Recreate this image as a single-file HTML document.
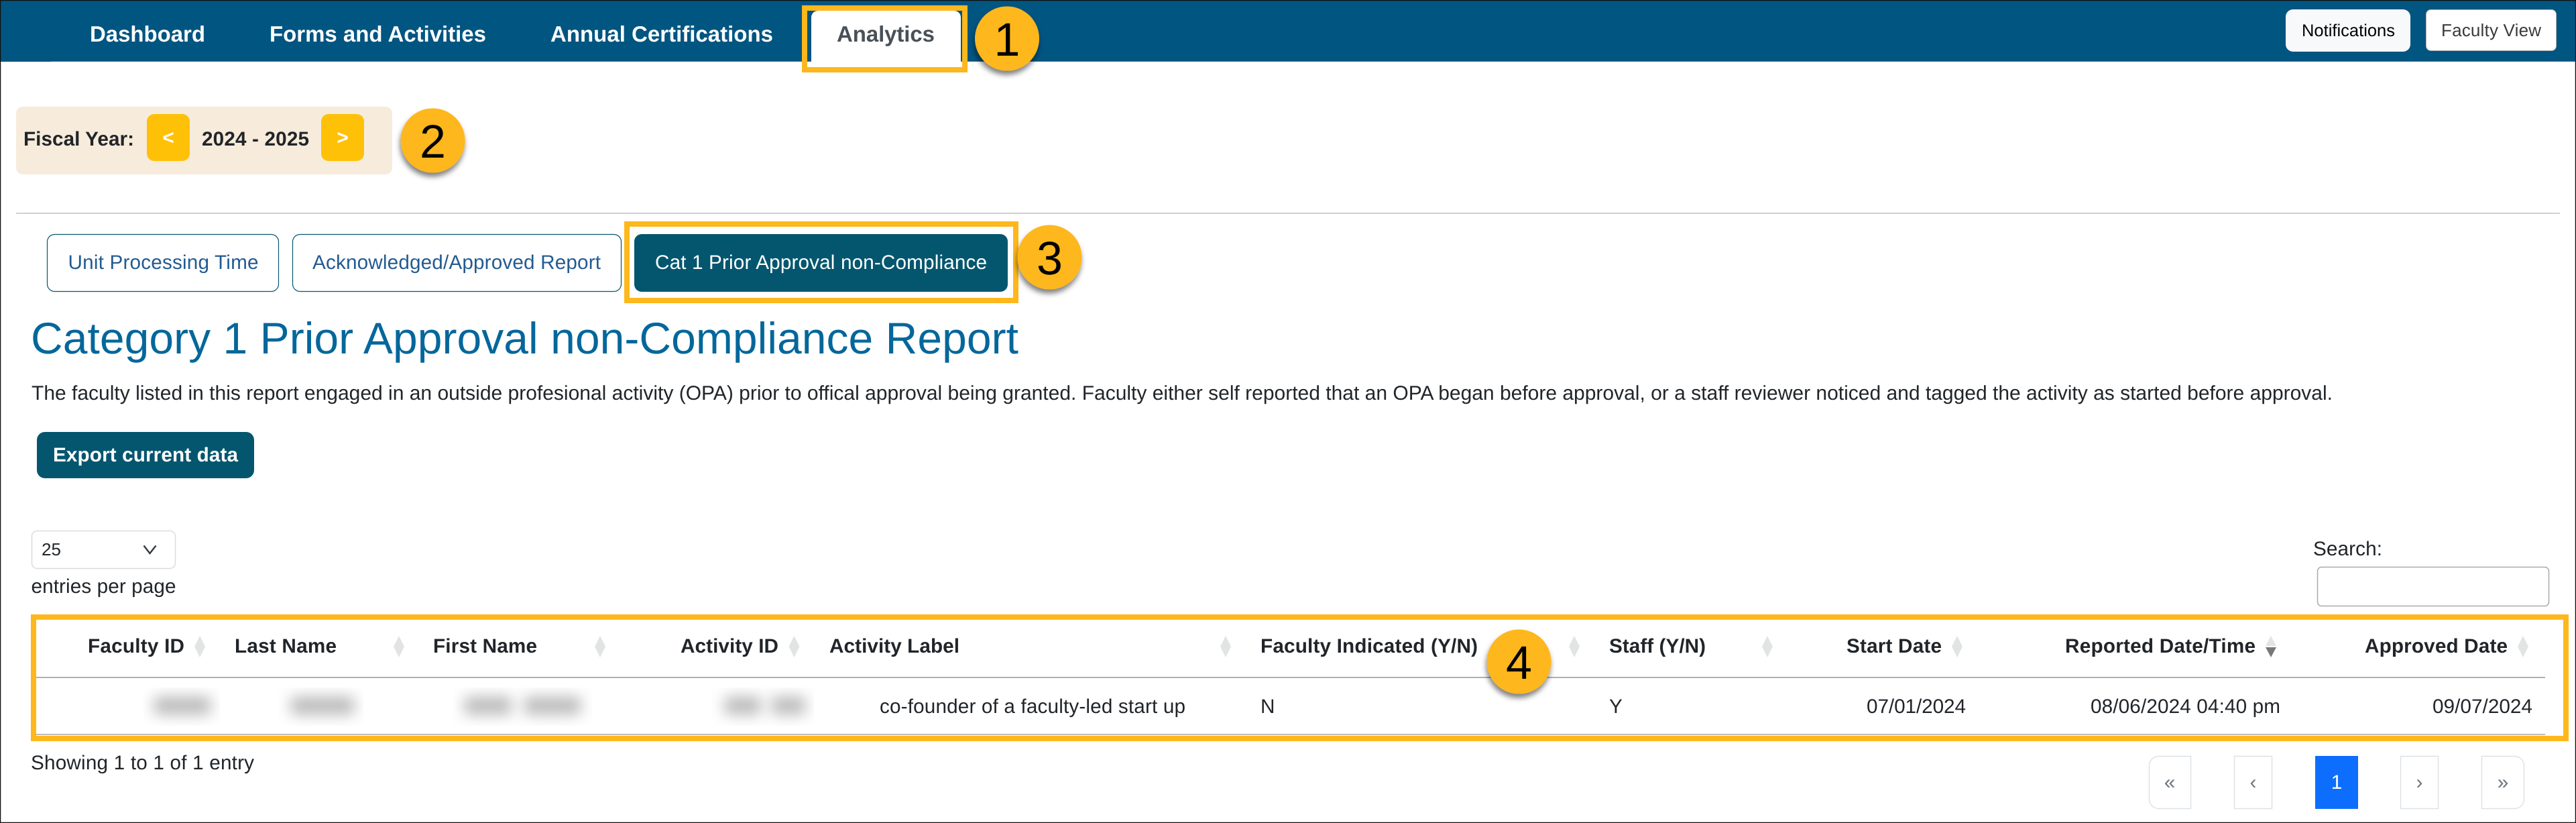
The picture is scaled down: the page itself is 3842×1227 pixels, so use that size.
<!DOCTYPE html>
<html lang="en">
<head>
<meta charset="utf-8">
<title>Category 1 Prior Approval non-Compliance Report</title>
<style>
html,body{margin:0;padding:0;background:#fff;width:3842px;height:1227px;overflow:hidden}
svg{display:block;position:absolute;left:0;top:0}
text{font-family:"Liberation Sans",Arial,sans-serif;font-size:29.7px;fill:#212529;white-space:pre;text-rendering:geometricPrecision}
.b{font-weight:700}
.nav{font-weight:700;font-size:33px;fill:#fff}
.d{font-size:70px;fill:#000;text-anchor:middle}
.tab{fill:#235b90}
.pg{fill:#6c757d;text-anchor:middle}
.o{fill:none;stroke:#feb71c;stroke-width:8}
.s{fill:#e2e3e3}
.c{fill:#feb71c;filter:url(#sh)}
.bl{fill:#b8b8b8}
</style>
</head>
<body>
<svg width="3842" height="1227" viewBox="0 0 3842 1227" xmlns="http://www.w3.org/2000/svg">
<defs>
<filter id="sh" x="-30%" y="-30%" width="160%" height="170%"><feDropShadow dx="-1" dy="6" stdDeviation="4" flood-color="#000" flood-opacity=".5"/></filter>
<filter id="bl" x="-100%" y="-200%" width="300%" height="500%"><feGaussianBlur stdDeviation="11"/></filter>
<clipPath id="c1"><rect x="214" y="1025" width="114" height="57"/></clipPath>
<clipPath id="c2"><rect x="415" y="1025" width="127" height="57"/></clipPath>
<clipPath id="c3"><rect x="676" y="1025" width="207" height="57"/></clipPath>
<clipPath id="c4"><rect x="1060" y="1025" width="154" height="57"/></clipPath>
</defs>

<rect width="3842" height="1227" fill="#fff"/>

<!-- header -->
<rect x="0" y="0" width="3842" height="92" fill="#015581"/>
<rect x="76" y="91" width="3766" height="1" fill="#666"/>
<text class="nav" x="134" y="62" textLength="172">Dashboard</text>
<text class="nav" x="402" y="62" textLength="323">Forms and Activities</text>
<text class="nav" x="821" y="62" textLength="332">Annual Certifications</text>
<path d="M1210 100V26a10 10 0 0 1 10-10h203a10 10 0 0 1 10 10v74z" fill="#fff"/>
<text class="nav" x="1248" y="62" textLength="146" style="fill:#495057">Analytics</text>
<rect x="1200" y="12" width="239" height="92" class="o"/>
<rect x="1204" y="92" width="231" height="8" fill="#fff"/>
<circle cx="1502" cy="57.5" r="48" class="c"/>
<text class="d" x="1502" y="83">1</text>

<rect x="3409" y="14" width="186" height="63" rx="11" fill="#f8f9fa"/>
<text x="3433" y="54" textLength="139" style="font-size:25.5px;fill:#000">Notifications</text>
<rect x="3618.5" y="14.5" width="194" height="61" rx="7" fill="#fff" stroke="#b5b5b5"/>
<text x="3641" y="54" textLength="149" style="font-size:26px;fill:#3a3a3a">Faculty View</text>

<!-- fiscal year -->
<rect x="24" y="159" width="561" height="101" rx="10" fill="#f7ebdc"/>
<text class="b" x="35" y="217" textLength="165">Fiscal Year:</text>
<rect x="219" y="170" width="64" height="70" rx="11" fill="#ffc107"/>
<text class="b" x="251" y="215" text-anchor="middle" style="fill:#fff">&lt;</text>
<text class="b" x="301" y="217" textLength="160">2024 - 2025</text>
<rect x="479" y="170" width="64" height="70" rx="11" fill="#ffc107"/>
<text class="b" x="511" y="215" text-anchor="middle" style="fill:#fff">&gt;</text>
<circle cx="645.5" cy="209.5" r="48" class="c"/>
<text class="d" x="645.5" y="235">2</text>

<rect x="24" y="317" width="3794" height="2" fill="#d0d0d0"/>

<!-- tabs -->
<rect x="70.5" y="349.5" width="345" height="85" rx="11" fill="#fff" stroke="#04566e" stroke-width="1.2"/>
<text class="tab" x="101.500" y="401" textLength="284">Unit Processing Time</text>
<rect x="436.5" y="349.5" width="490" height="85" rx="11" fill="#fff" stroke="#04566e" stroke-width="1.2"/>
<text class="tab" x="466" y="401" textLength="430">Acknowledged/Approved Report</text>
<rect x="946" y="349" width="557" height="86" rx="11" fill="#04566e"/>
<text x="977" y="401" textLength="495" style="fill:#fff">Cat 1 Prior Approval non-Compliance</text>
<rect x="935" y="334" width="580" height="114" class="o"/>
<circle cx="1565.5" cy="383.5" r="48" class="c"/>
<text class="d" x="1565.5" y="409">3</text>

<!-- heading -->
<text x="46" y="527" textLength="1473" style="font-size:66px;fill:#04679b">Category 1 Prior Approval non-Compliance Report</text>
<text x="47" y="596" textLength="3432" style="font-size:30px">The faculty listed in this report engaged in an outside profesional activity (OPA) prior to offical approval being granted. Faculty either self reported that an OPA began before approval, or a staff reviewer noticed and tagged the activity as started before approval.</text>

<rect x="55" y="644" width="324" height="69" rx="12" fill="#04566e"/>
<text class="b" x="79" y="688" textLength="276" style="fill:#fff">Export current data</text>

<!-- length + search -->
<rect x="47.5" y="791.5" width="214" height="56" rx="8" fill="#fff" stroke="#dcdcdc" stroke-width="1.5"/>
<text x="62" y="828" style="font-size:26px">25</text>
<path d="M214.5 813.5 223.5 825 232.5 813.5" fill="none" stroke="#343a40" stroke-width="2.4"/>
<text x="46.500" y="884" textLength="216">entries per page</text>
<text x="3450" y="828" textLength="103">Search:</text>
<rect x="3456.5" y="845.5" width="345" height="58" rx="6" fill="#fff" stroke="#aaa" stroke-width="1.5"/>

<!-- table -->
<rect x="54" y="1009" width="3742" height="2" fill="#b0b0b0"/>
<rect x="54" y="1094" width="3742" height="2" fill="#bbb"/>
<text class="b" x="131" y="973" textLength="144">Faculty ID</text>
<text class="b" x="350" y="973" textLength="152">Last Name</text>
<text class="b" x="646" y="973" textLength="155">First Name</text>
<text class="b" x="1015" y="973" textLength="146">Activity ID</text>
<text class="b" x="1237" y="973" textLength="194">Activity Label</text>
<text class="b" x="1880" y="973" textLength="324">Faculty Indicated (Y/N)</text>
<text class="b" x="2400" y="973" textLength="144">Staff (Y/N)</text>
<text class="b" x="2754" y="973" textLength="142">Start Date</text>
<text class="b" x="3080" y="973" textLength="284">Reported Date/Time</text>
<text class="b" x="3527" y="973" textLength="213">Approved Date</text>
<path class="s" d="M298 948l8 16-8 16-8-16zM595 948l8 16-8 16-8-16zM895 948l8 16-8 16-8-16zM1184.500 948l8 16-8 16-8-16zM1828 948l8 16-8 16-8-16zM2348 948l8 16-8 16-8-16zM2636 948l8 16-8 16-8-16zM2919 948l8 16-8 16-8-16zM3763 948l8 16-8 16-8-16z"/>
<path class="s" d="M3387 948l8 15h-16z"/>
<path fill="#77787b" d="M3379 965h16l-8 15z"/>

<g clip-path="url(#c1)"><rect class="bl" x="230" y="1039" width="84" height="26" filter="url(#bl)"/></g>
<g clip-path="url(#c2)"><rect class="bl" x="434" y="1039" width="94" height="26" filter="url(#bl)"/></g>
<g clip-path="url(#c3)"><rect class="bl" x="693" y="1039" width="70" height="26" filter="url(#bl)"/><rect class="bl" x="782" y="1039" width="84" height="26" filter="url(#bl)"/></g>
<g clip-path="url(#c4)"><rect class="bl" x="1081" y="1039" width="54" height="26" filter="url(#bl)"/><rect class="bl" x="1151" y="1039" width="50" height="26" filter="url(#bl)"/></g>

<text x="1312" y="1063" textLength="456">co-founder of a faculty-led start up</text>
<text x="1880" y="1063">N</text>
<text x="2400" y="1063">Y</text>
<text x="2784" y="1063" textLength="148">07/01/2024</text>
<text x="3118" y="1063" textLength="283">08/06/2024 04:40 pm</text>
<text x="3628" y="1063" textLength="149">09/07/2024</text>

<rect x="50" y="920" width="3777" height="181" class="o" style="stroke-width:8"/>
<circle cx="2265.500" cy="986.500" r="48" class="c"/>
<text class="d" x="2265.500" y="1012">4</text>

<!-- footer -->
<text x="46" y="1147" textLength="333">Showing 1 to 1 of 1 entry</text>
<path d="M3267.500 1127.500h-48a14 14 0 0 0-14 14v50a14 14 0 0 0 14 14h48z" fill="#fff" stroke="#dee2e6" stroke-width="1.5"/>
<text class="pg" x="3236" y="1176">«</text>
<rect x="3332.500" y="1127.500" width="56" height="78" fill="#fff" stroke="#dee2e6" stroke-width="1.500"/>
<text class="pg" x="3360.500" y="1176">‹</text>
<rect x="3453" y="1127" width="64" height="79" fill="#0d6efd"/>
<text x="3485" y="1176" text-anchor="middle" style="fill:#fff">1</text>
<rect x="3580.500" y="1127.500" width="56" height="78" fill="#fff" stroke="#dee2e6" stroke-width="1.500"/>
<text class="pg" x="3608.500" y="1176">›</text>
<path d="M3701.500 1127.500h49a14 14 0 0 1 14 14v50a14 14 0 0 1-14 14h-49z" fill="#fff" stroke="#dee2e6" stroke-width="1.5"/>
<text class="pg" x="3733" y="1176">»</text>

<!-- screenshot frame -->
<rect x="0.500" y="0.500" width="3841" height="1226" fill="none" stroke="#111" stroke-width="1.500"/>
</svg>
</body>
</html>
